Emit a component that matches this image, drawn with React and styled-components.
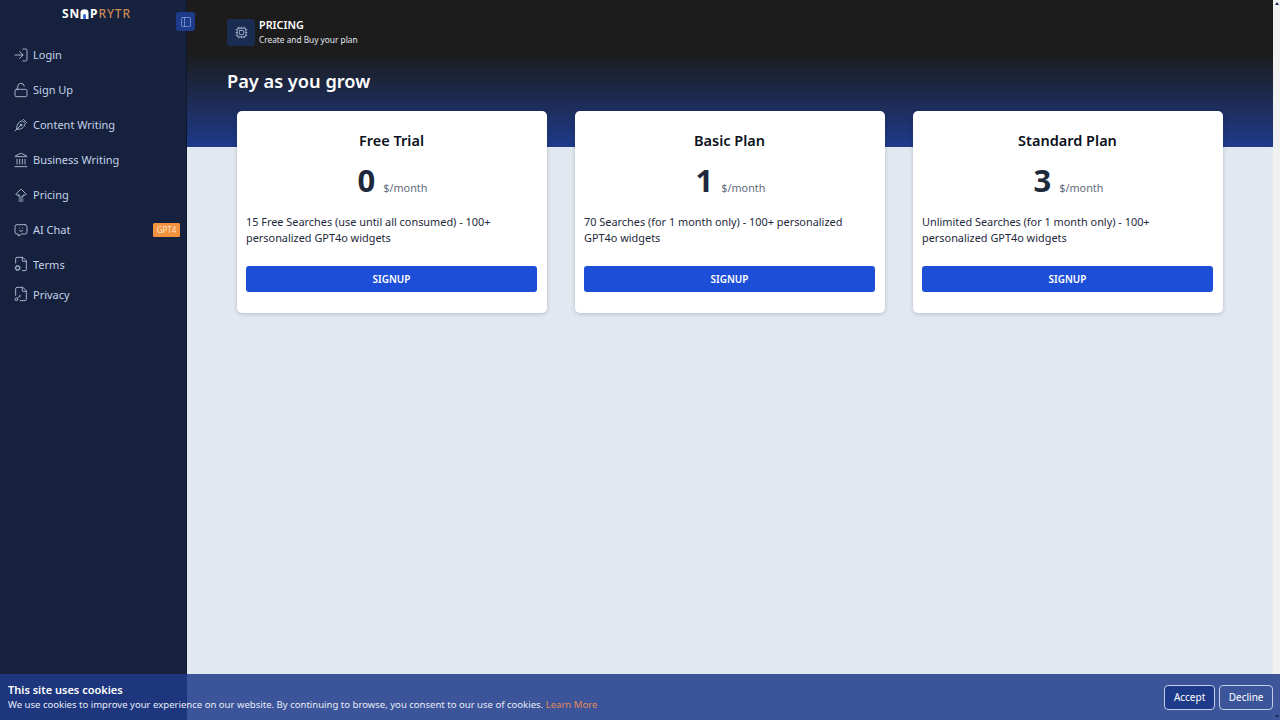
import React from 'react';
import styled, { createGlobalStyle } from 'styled-components';
import { LogIn, LockOpen, Landmark, FileCog, FileKey2, PanelLeft, Cpu } from 'lucide-react';
import { TbArrowBigUpLines, TbMessageChatbot } from 'react-icons/tb';

const GlobalStyle = createGlobalStyle`
  html, body { margin: 0; height: 100%; overflow: hidden; background: #e2e8f0; }
  * { box-sizing: border-box; }
  body { font-family: "Noto Sans", "Open Sans", sans-serif; }
`;

const Page = styled.div`
  display: flex;
  width: 1280px;
  height: 720px;
  position: relative;
  overflow: hidden;
`;

const Sidebar = styled.aside`
  width: 187px;
  flex: none;
  background: #16213e;
  border-right: 1px solid #0f172a;
  padding-top: 7px;
`;

const Logo = styled.div`
  display: flex;
  justify-content: center;
  align-items: center;
  height: 14px;
  padding-left: 7px;
  font-size: 12px;
  line-height: 14px;
  font-weight: 700;
  letter-spacing: 0.9px;
  color: #fff;
  svg { margin-right: 0.9px; }
  span { color: #c98a56; font-weight: 500; }
`;

const Collapse = styled.button`
  position: absolute;
  z-index: 2;
  top: 12px;
  left: 176px;
  width: 19px;
  height: 19px;
  padding: 0;
  border: 0;
  border-radius: 3px;
  background: #1e3a8a;
  color: #93b4e8;
  display: flex;
  align-items: center;
  justify-content: center;
`;

const Nav = styled.nav`
  display: flex;
  flex-direction: column;
  margin-top: 16px;
  padding: 0 6px 0 13px;
`;

const NavItem = styled.a`
  display: flex;
  align-items: center;
  gap: 4px;
  height: ${(p) => p.$h || 35}px;
  font-size: 11px;
  color: #c4d3e8;
  svg { flex: none; color: #b8c9e0; }
`;

const Badge = styled.span`
  margin-left: auto;
  width: 27px;
  text-align: center;
  background: #f5923e;
  color: #fde6cf;
  font-size: 8px;
  line-height: 14px;
  border-radius: 1.5px;
`;

const Main = styled.main`
  flex: 1;
  min-width: 0;
  position: relative;
`;

const Hero = styled.div`
  height: 147px;
  padding: 18px 0 0 40px;
  background: linear-gradient(to bottom, #1c1c1c 0%, #1c1c1c 36%, #1e3a8a 100%);
`;

const TitleRow = styled.div`
  display: flex;
  align-items: center;
  gap: 4px;
  color: #fff;
`;

const TitleIcon = styled.div`
  width: 28px;
  height: 27px;
  border-radius: 3px;
  background: #1a2c52;
  color: #c4d3e8;
  display: flex;
  align-items: center;
  justify-content: center;
`;

const TitleText = styled.div`
  h1 { margin: 0; font-size: 10.8px; line-height: 14px; font-weight: 600; }
  p { margin: 1px 0 0; font-size: 8.3px; line-height: 13px; color: #e2e8f0; }
`;

const Heading = styled.h2`
  margin: 22px 0 0;
  font-size: 18.2px;
  line-height: 26px;
  font-weight: 600;
  color: #fff;
`;

const Cards = styled.div`
  position: absolute;
  top: 111px;
  left: 50px;
  display: grid;
  grid-template-columns: repeat(3, 310px);
  gap: 28px;
`;

const Card = styled.section`
  height: 202px;
  background: #fff;
  border-radius: 5px;
  box-shadow: 0 1px 4px rgba(15, 23, 42, 0.2);
  padding: 19px 10px 0 9px;
  h3 { margin: 0; text-align: center; font-size: 14.5px; line-height: 20px; font-weight: 600; color: #0b1120; }
`;

const Price = styled.div`
  display: flex;
  justify-content: center;
  align-items: baseline;
  gap: 8px;
  margin: 10px 0 0 2px;
  height: 40px;
  color: #1e293b;
  strong { font-size: 31px; line-height: 40px; font-weight: 700; }
  span { font-size: 10.8px; color: #5f6b7a; }
`;

const Description = styled.p`
  margin: 14px 0 0;
  font-size: 10.9px;
  line-height: 16px;
  color: #1e293b;
`;

const Signup = styled.button`
  display: block;
  width: 100%;
  height: 26px;
  margin-top: 20px;
  border: 0;
  border-radius: 3px;
  background: #1d4ed8;
  color: #fff;
  font: 600 10px "Noto Sans", sans-serif;
`;

const Scrollbar = styled.div`
  position: absolute;
  top: 0;
  right: 0;
  bottom: 0;
  width: 7px;
  background: #f1f1f1;
  &::before {
    content: '';
    position: absolute;
    top: 2px;
    left: 1.5px;
    border: 2px solid transparent;
    border-top: 0;
    border-bottom: 3px solid #1e2a5a;
  }
`;

const Cookie = styled.div`
  position: absolute;
  left: 0;
  right: 0;
  bottom: 0;
  height: 46px;
  background: rgba(30, 58, 138, 0.85);
  color: #fff;
  display: flex;
  align-items: center;
  justify-content: space-between;
  padding: 0 7px 0 8px;
  &::after {
    content: '';
    position: absolute;
    right: 1.5px;
    bottom: 2px;
    border: 2px solid transparent;
    border-bottom: 0;
    border-top: 3px solid #1e2a5a;
  }
`;

const CookieText = styled.div`
  h4 { margin: 0; font-size: 11px; line-height: 15px; font-weight: 600; }
  p { margin: 1px 0 0; font-size: 9.55px; line-height: 14px; color: #e8edf7; }
  a { color: #e08a5c; }
`;

const CookieActions = styled.div`
  display: flex;
  gap: 4px;
`;

const CookieButton = styled.button`
  height: 25px;
  padding: 0 ${(p) => (p.$solid ? 9 : 8.5)}px;
  border: 1px solid #c3cfe6;
  border-radius: 4px;
  background: ${(p) => (p.$solid ? '#1e3a8a' : 'transparent')};
  color: #fff;
  font: 400 10px "Noto Sans", sans-serif;
`;

const LogoMark = () => (
  <svg width="9" height="10" viewBox="0 0 9 10" aria-hidden="true">
    <path d="M0.5 10V3.5C0.5 1.5 2 0.3 4.5 0.3S8.5 1.5 8.5 3.5V10Z" fill="#fff" />
    <path d="M3 10V6.5C3 5.6 3.6 5 4.5 5S6 5.6 6 6.5V10Z" fill="#3b6fd8" />
  </svg>
);

// nib icon, none of the packs had this exact one
const NibIcon = ({ size, strokeWidth }) => (
  <svg width={size} height={size} viewBox="0 0 24 24" fill="none" stroke="currentColor" strokeWidth={strokeWidth} strokeLinecap="round" strokeLinejoin="round">
    <path d="M6 18C4.5 12.5 8 7.5 14 5.5L18.5 10C16.5 16 11.5 19.5 6 18Z" />
    <path d="M3 21L11 13" />
    <circle cx="12" cy="12" r="1.4" />
    <path d="M15.5 3.5L20.5 8.5" />
  </svg>
);

const links = [
  { label: 'Login', icon: LogIn },
  { label: 'Sign Up', icon: LockOpen },
  { label: 'Content Writing', icon: NibIcon },
  { label: 'Business Writing', icon: Landmark },
  { label: 'Pricing', icon: TbArrowBigUpLines },
  { label: 'AI Chat', icon: TbMessageChatbot, badge: 'GPT4' },
  { label: 'Terms', icon: FileCog, h: 34 },
  { label: 'Privacy', icon: FileKey2, h: 26 },
];

const plans = [
  { name: 'Free Trial', price: 0, text: '15 Free Searches (use until all consumed) - 100+ personalized GPT4o widgets' },
  { name: 'Basic Plan', price: 1, text: '70 Searches (for 1 month only) - 100+ personalized GPT4o widgets' },
  { name: 'Standard Plan', price: 3, text: 'Unlimited Searches (for 1 month only) - 100+ personalized GPT4o widgets' },
];

export default function App() {
  return (
    <Page>
      <GlobalStyle />
      <Sidebar>
        <Logo aria-label="SNAPRYTR">SN<LogoMark />P<span>RYTR</span></Logo>
        <Nav>
          {links.map(({ label, icon: Icon, badge, h }) => (
            <NavItem key={label} $h={h}>
              <Icon size={16} strokeWidth={1.3} />
              {label}
              {badge && <Badge>{badge}</Badge>}
            </NavItem>
          ))}
        </Nav>
      </Sidebar>
      <Collapse><PanelLeft size={12} strokeWidth={1.3} /></Collapse>
      <Main>
        <Hero>
          <TitleRow>
            <TitleIcon><Cpu size={13} strokeWidth={1.3} /></TitleIcon>
            <TitleText>
              <h1>PRICING</h1>
              <p>Create and Buy your plan</p>
            </TitleText>
          </TitleRow>
          <Heading>Pay as you grow</Heading>
        </Hero>
        <Cards>
          {plans.map((plan) => (
            <Card key={plan.name}>
              <h3>{plan.name}</h3>
              <Price>
                <strong>{plan.price}</strong>
                <span>$/month</span>
              </Price>
              <Description>{plan.text}</Description>
              <Signup>SIGNUP</Signup>
            </Card>
          ))}
        </Cards>
      </Main>
      <Scrollbar />
      <Cookie>
        <CookieText>
          <h4>This site uses cookies</h4>
          <p>We use cookies to improve your experience on our website. By continuing to browse, you consent to our use of cookies. <a>Learn More</a></p>
        </CookieText>
        <CookieActions>
          <CookieButton $solid>Accept</CookieButton>
          <CookieButton>Decline</CookieButton>
        </CookieActions>
      </Cookie>
    </Page>
  );
}
